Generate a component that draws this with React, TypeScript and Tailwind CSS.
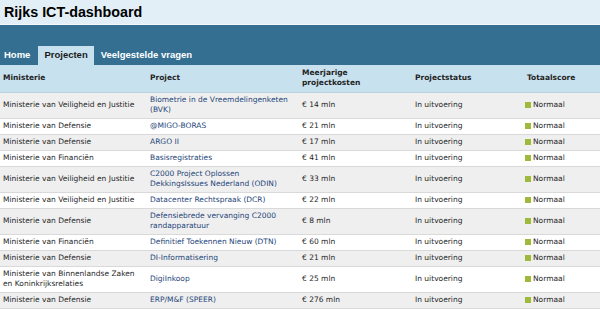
const rows: { min: string; project: string; cost: string; two?: boolean }[] = [
  { min: "Ministerie van Veiligheid en Justitie", project: "Biometrie in de Vreemdelingenketen (BVK)", cost: "€ 14 mln", two: true },
  { min: "Ministerie van Defensie", project: "@MIGO-BORAS", cost: "€ 21 mln" },
  { min: "Ministerie van Defensie", project: "ARGO II", cost: "€ 17 mln" },
  { min: "Ministerie van Financiën", project: "Basisregistraties", cost: "€ 41 mln" },
  { min: "Ministerie van Veiligheid en Justitie", project: "C2000 Project Oplossen DekkingsIssues Nederland (ODIN)", cost: "€ 33 mln", two: true },
  { min: "Ministerie van Veiligheid en Justitie", project: "Datacenter Rechtspraak (DCR)", cost: "€ 22 mln" },
  { min: "Ministerie van Defensie", project: "Defensiebrede vervanging C2000 randapparatuur", cost: "€ 8 mln", two: true },
  { min: "Ministerie van Financiën", project: "Definitief Toekennen Nieuw (DTN)", cost: "€ 60 mln" },
  { min: "Ministerie van Defensie", project: "DI-Informatisering", cost: "€ 21 mln" },
  { min: "Ministerie van Binnenlandse Zaken en Koninkrijksrelaties", project: "DigiInkoop", cost: "€ 25 mln", two: true },
  { min: "Ministerie van Defensie", project: "ERP/M&F (SPEER)", cost: "€ 276 mln" },
];

export default function App() {
  return (
    <div className="w-[600px] h-[310px] overflow-hidden bg-white font-['DejaVu_Sans',Verdana,sans-serif]">
      {/* Title band */}
      <div className="h-[25px] bg-[#e2eff7] border-b border-[#f4f9fc] pl-[4px] flex items-center">
        <h1 className="text-[14.3px] font-bold text-black font-['Liberation_Sans',Arial,sans-serif] leading-none">
          Rijks ICT-dashboard
        </h1>
      </div>

      {/* Navigation band */}
      <div className="h-[40px] bg-[#346f91] flex items-end pl-[4px] font-['Liberation_Sans',Arial,sans-serif] text-[9.5px] font-bold">
        <div className="h-[19px] pr-[8px] flex items-center text-white">Home</div>
        <div className="h-[19px] px-[6px] flex items-center bg-[#c8e1ee] text-[#1a1a1a]">Projecten</div>
        <div className="h-[19px] ml-[1px] px-[6px] flex items-center text-white">Veelgestelde vragen</div>
      </div>

      {/* Table */}
      <table className="w-[600px] table-fixed border-collapse text-[7.5px] leading-[10px] text-[#1f1f1f]">
        <colgroup>
          <col className="w-[147px]" />
          <col className="w-[152px]" />
          <col className="w-[113px]" />
          <col className="w-[110px]" />
          <col className="w-[78px]" />
        </colgroup>
        <thead>
          <tr className="bg-[#c8e1ee] h-[27px] border-b border-[#b9d3e0] font-bold text-left">
            <th className="pl-[3px] font-bold">Ministerie</th>
            <th className="pl-[3px] font-bold">Project</th>
            <th className="pl-[3px] font-bold">Meerjarige<br />projectkosten</th>
            <th className="pl-[3px] font-bold">Projectstatus</th>
            <th className="pl-[5px] font-bold">Totaalscore</th>
          </tr>
        </thead>
        <tbody>
          {rows.map((r, i) => (
            <tr
              key={i}
              className={`border-b border-[#d9d9d9] ${i % 2 === 0 ? "bg-[#efefef]" : "bg-white"} ${r.two ? "h-[26px]" : "h-[16px]"}`}
            >
              <td className="pl-[3px] pr-[4px] align-middle">{r.min}</td>
              <td className="pl-[3px] pr-[4px] align-middle text-[#25467a]">{r.project}</td>
              <td className="pl-[3px] align-middle">{r.cost}</td>
              <td className="pl-[3px] align-middle">In uitvoering</td>
              <td className="pl-[3px] align-middle">
                <span className="flex items-center gap-[2px]">
                  <span className="inline-block w-[6px] h-[6px] bg-[#9dba3c]" />
                  Normaal
                </span>
              </td>
            </tr>
          ))}
        </tbody>
      </table>
    </div>
  );
}
